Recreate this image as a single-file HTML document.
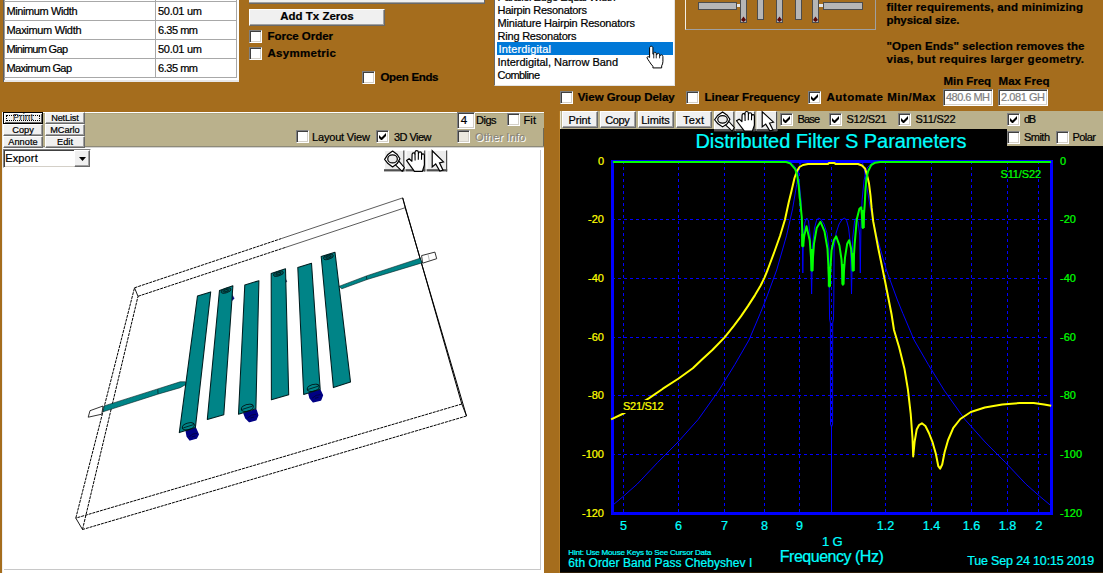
<!DOCTYPE html>
<html><head><meta charset="utf-8"><title>Filter</title>
<style>
html,body{margin:0;padding:0}
body{width:1103px;height:573px;overflow:hidden;position:relative;background:#a56d1d;font-family:"Liberation Sans",sans-serif}
.t{position:absolute;white-space:pre;line-height:1;font-family:"Liberation Sans",sans-serif;-webkit-text-stroke:0.22px currentColor}
.b{position:absolute}
.cb{position:absolute;width:13px;height:13px;box-sizing:border-box;border:1px solid;border-color:#808080 #fff #fff #808080;box-shadow:inset 1px 1px 0 #404040, inset -1px -1px 0 #d4d0c8}
.btn{position:absolute;box-sizing:border-box;background:#f0f0f0;border:1px solid;border-color:#fff #696969 #696969 #fff;box-shadow:inset -1px -1px 0 #a0a0a0}
svg{position:absolute;overflow:visible}
</style></head><body>
<div class="b" style="left:3px;top:0px;width:1px;height:82px;background:#5e5e5e;"></div>
<div class="b" style="left:4px;top:0px;width:235px;height:82px;background:#fff;"></div>
<div class="b" style="left:4px;top:0px;width:1px;height:80px;background:#9c9c9c;"></div>
<div class="b" style="left:4px;top:80px;width:235px;height:2px;background:#e8e8e8;"></div>
<div class="b" style="left:4px;top:1px;width:233px;height:1px;background:#a8a8a8;"></div>
<div class="b" style="left:4px;top:20px;width:233px;height:1px;background:#a8a8a8;"></div>
<div class="b" style="left:4px;top:39px;width:233px;height:1px;background:#a8a8a8;"></div>
<div class="b" style="left:4px;top:58px;width:233px;height:1px;background:#a8a8a8;"></div>
<div class="b" style="left:4px;top:77px;width:233px;height:1px;background:#a8a8a8;"></div>
<div class="b" style="left:155px;top:0px;width:1px;height:78px;background:#a8a8a8;"></div>
<div class="b" style="left:236px;top:0px;width:1px;height:78px;background:#a8a8a8;"></div>
<span class="t" style="left:6.50px;top:5.99px;font-size:11px;color:#000;letter-spacing:-0.399px;">Minimum Width</span>
<span class="t" style="left:158.00px;top:5.99px;font-size:11px;color:#000;letter-spacing:-0.266px;">50.01 um</span>
<span class="t" style="left:6.50px;top:24.99px;font-size:11px;color:#000;letter-spacing:-0.320px;">Maximum Width</span>
<span class="t" style="left:158.00px;top:24.99px;font-size:11px;color:#000;letter-spacing:-0.465px;">6.35 mm</span>
<span class="t" style="left:6.50px;top:43.99px;font-size:11px;color:#000;letter-spacing:-0.696px;">Minimum Gap</span>
<span class="t" style="left:158.00px;top:43.99px;font-size:11px;color:#000;letter-spacing:-0.266px;">50.01 um</span>
<span class="t" style="left:6.50px;top:62.99px;font-size:11px;color:#000;letter-spacing:-0.602px;">Maximum Gap</span>
<span class="t" style="left:158.00px;top:62.99px;font-size:11px;color:#000;letter-spacing:-0.465px;">6.35 mm</span>
<div class="b" style="left:249px;top:0px;width:236px;height:2px;background:#f0f0f0;"></div>
<div class="b" style="left:249px;top:2px;width:236px;height:1px;background:#a0a0a0;"></div>
<div class="b" style="left:249px;top:3px;width:236px;height:1px;background:#696969;"></div>
<div class="b" style="left:484px;top:0px;width:1px;height:4px;background:#696969;"></div>
<div class="btn" style="left:249px;top:9px;width:136px;height:17px"></div>
<span class="t" style="left:280.25px;top:11.07px;font-size:11.5px;font-weight:700;color:#000;letter-spacing:0.002px;">Add Tx Zeros</span>
<div class="cb" style="left:249px;top:30px;background:#fff">
</div>
<span class="t" style="left:267.50px;top:30.77px;font-size:11.5px;font-weight:700;color:#000;letter-spacing:-0.033px;">Force Order</span>
<div class="cb" style="left:249px;top:47px;background:#fff">
</div>
<span class="t" style="left:267.50px;top:47.77px;font-size:11.5px;font-weight:700;color:#000;letter-spacing:0.296px;">Asymmetric</span>
<div class="cb" style="left:362px;top:71px;background:#fff">
</div>
<span class="t" style="left:380.50px;top:71.77px;font-size:11.5px;font-weight:700;color:#000;letter-spacing:-0.338px;">Open Ends</span>
<div class="b" style="left:494px;top:0px;width:181px;height:86px;background:#fff;border-left:1px solid #696969;border-right:1px solid #e3e3e3;border-bottom:1px solid #e3e3e3;box-sizing:border-box"></div>
<span class="t" style="left:497.50px;top:-7.81px;font-size:11px;color:#000;letter-spacing:-0.408px;">Parallel Edge Equal Width</span>
<span class="t" style="left:497.50px;top:5.19px;font-size:11px;color:#000;letter-spacing:-0.274px;">Hairpin Resonators</span>
<span class="t" style="left:497.50px;top:18.19px;font-size:11px;color:#000;letter-spacing:-0.184px;">Miniature Hairpin Resonators</span>
<span class="t" style="left:497.50px;top:31.19px;font-size:11px;color:#000;letter-spacing:-0.209px;">Ring Resonators</span>
<div class="b" style="left:497px;top:42px;width:176px;height:13px;background:#0078d7;"></div>
<span class="t" style="left:498.50px;top:44.19px;font-size:11px;color:#fff;letter-spacing:0.159px;">Interdigital</span>
<span class="t" style="left:497.50px;top:57.19px;font-size:11px;color:#000;letter-spacing:-0.023px;">Interdigital, Narrow Band</span>
<span class="t" style="left:497.50px;top:70.19px;font-size:11px;color:#000;letter-spacing:-0.567px;">Combline</span>
<svg style="left:645px;top:44.5px" width="20" height="25" viewBox="0 0 24 30">
<path d="M7.5 1.5 C8.8 1.5 9.5 2.4 9.5 3.5 L9.5 11 L10.5 11 L10.5 10 C10.5 9 11.3 8.6 12.3 8.8 C13.2 9 13.5 9.6 13.5 10.5 L13.5 11.6 L14.5 11.6 L14.5 11 C14.5 10.1 15.3 9.8 16.2 10 C17 10.2 17.5 10.7 17.5 11.6 L17.5 12.8 L18.5 12.8 C18.5 11.9 19.2 11.6 20 11.8 C21 12 21.5 12.8 21.5 14 L21.5 20 C21.5 22 20.8 23.5 20 25 L20 27.5 L9.5 27.5 L9.5 25.5 C8 24 6.5 22 5 19.5 C4 18 2.8 16.5 2.5 15.5 C2.2 14.3 3.4 13.6 4.5 14.2 L5.5 15 L5.5 3.5 C5.5 2.4 6.2 1.5 7.5 1.5 Z" fill="#fff" stroke="#000" stroke-width="1.2" stroke-linejoin="round"/>
<path d="M10.5 11 L10.5 16 M13.5 11.6 L13.5 16 M17.5 12.8 L17.5 16" stroke="#000" stroke-width="1" fill="none"/>
</svg>
<div class="b" style="left:685px;top:0px;width:191px;height:30px;background:transparent;border-left:1px solid #f4efe4;border-bottom:1px solid #a0a0a0;border-right:1px solid #a0a0a0;box-sizing:border-box"></div>
<div class="b" style="left:698px;top:2px;width:39px;height:8px;background:#b6b6b6;border:1px solid #4c4c4c;box-sizing:border-box"></div>
<div class="b" style="left:823px;top:2px;width:40px;height:8px;background:#b6b6b6;border:1px solid #4c4c4c;box-sizing:border-box"></div>
<div class="b" style="left:740px;top:-1px;width:7px;height:24px;background:#b6b6b6;border:1px solid #4c4c4c;box-sizing:border-box"></div>
<svg style="left:740px;top:15px" width="7" height="8"><path d="M3.5 1.5 L6 5 L3.5 7 L1 5 Z" fill="#5a0808"/></svg>
<div class="b" style="left:757px;top:-1px;width:7px;height:21px;background:#b6b6b6;border:1px solid #4c4c4c;box-sizing:border-box"></div>
<div class="b" style="left:776px;top:-1px;width:7px;height:24px;background:#b6b6b6;border:1px solid #4c4c4c;box-sizing:border-box"></div>
<svg style="left:776px;top:15px" width="7" height="8"><path d="M3.5 1.5 L6 5 L3.5 7 L1 5 Z" fill="#5a0808"/></svg>
<div class="b" style="left:795px;top:-1px;width:7px;height:21px;background:#b6b6b6;border:1px solid #4c4c4c;box-sizing:border-box"></div>
<div class="b" style="left:812px;top:-1px;width:7px;height:24px;background:#b6b6b6;border:1px solid #4c4c4c;box-sizing:border-box"></div>
<svg style="left:812px;top:15px" width="7" height="8"><path d="M3.5 1.5 L6 5 L3.5 7 L1 5 Z" fill="#5a0808"/></svg>
<div class="b" style="left:737px;top:4px;width:3px;height:3px;background:#e8e8e8;"></div>
<div class="b" style="left:819px;top:4px;width:4px;height:3px;background:#e8e8e8;"></div>
<span class="t" style="left:886.50px;top:2.47px;font-size:11.5px;font-weight:700;color:#000;letter-spacing:0.160px;">filter requirements, and minimizing</span>
<span class="t" style="left:886.50px;top:15.27px;font-size:11.5px;font-weight:700;color:#000;letter-spacing:-0.088px;">physical size.</span>
<span class="t" style="left:886.50px;top:41.47px;font-size:11.5px;font-weight:700;color:#000;letter-spacing:0.075px;">"Open Ends" selection removes the</span>
<span class="t" style="left:886.50px;top:54.47px;font-size:11.5px;font-weight:700;color:#000;letter-spacing:0.289px;">vias, but requires larger geometry.</span>
<span class="t" style="left:943.50px;top:75.87px;font-size:11.5px;font-weight:700;color:#000;letter-spacing:-0.059px;">Min Freq</span>
<span class="t" style="left:998.50px;top:75.87px;font-size:11.5px;font-weight:700;color:#000;letter-spacing:0.073px;">Max Freq</span>
<div class="b" style="left:943px;top:89px;width:50px;height:17px;background:#fff;box-sizing:border-box;border:1px solid;border-color:#808080 #fff #fff #808080;box-shadow:inset 1px 1px 0 #404040, inset -1px -1px 0 #d4d0c8"></div>
<span class="t" style="left:946.00px;top:92.19px;font-size:11px;color:#808080;letter-spacing:-0.527px;">480.6 MH</span>
<div class="b" style="left:998px;top:89px;width:50px;height:17px;background:#fff;box-sizing:border-box;border:1px solid;border-color:#808080 #fff #fff #808080;box-shadow:inset 1px 1px 0 #404040, inset -1px -1px 0 #d4d0c8"></div>
<span class="t" style="left:1001.00px;top:92.19px;font-size:11px;color:#808080;letter-spacing:-0.440px;">2.081 GH</span>
<div class="cb" style="left:560px;top:91px;background:#fff">
</div>
<span class="t" style="left:577.70px;top:91.77px;font-size:11.5px;font-weight:700;color:#000;letter-spacing:-0.038px;">View Group Delay</span>
<div class="cb" style="left:686px;top:91px;background:#fff">
</div>
<span class="t" style="left:704.50px;top:91.77px;font-size:11.5px;font-weight:700;color:#000;letter-spacing:-0.024px;">Linear Frequency</span>
<div class="cb" style="left:808px;top:91px;background:#fff">
<svg width="9" height="9" viewBox="0 0 9 9" style="left:1px;top:1px"><path d="M1 3 L1 6 L3 8 L4 8 L8 4 L8 1 L3.5 5.5 Z" fill="#000"/></svg>
</div>
<span class="t" style="left:826.50px;top:91.77px;font-size:11.5px;font-weight:700;color:#000;letter-spacing:0.494px;">Automate Min/Max</span>
<div class="b" style="left:2px;top:112px;width:542px;height:461px;background:#fff;"></div>
<div class="b" style="left:2px;top:112px;width:542px;height:36px;background:#bab18c;"></div>
<div class="b" style="left:2px;top:112px;width:542px;height:1px;background:#fff;"></div>
<div class="b" style="left:2px;top:113px;width:542px;height:1px;background:#aea682;"></div>
<div class="b" style="left:2px;top:112px;width:2px;height:36px;background:#f4f2ea;"></div>
<div class="b" style="left:2px;top:146px;width:542px;height:1px;background:#8e8a78;"></div>
<div class="b" style="left:2px;top:147px;width:542px;height:1px;background:#d4d4d4;"></div>
<div class="b" style="left:543px;top:128px;width:1px;height:18px;background:#6e6a58;"></div>
<div class="b" style="left:2px;top:112px;width:1px;height:461px;background:#f0f0f0;"></div>
<div class="b" style="left:540px;top:150px;width:1px;height:420px;background:#c8c8c8;"></div>
<div class="b" style="left:4px;top:569px;width:537px;height:1px;background:#c8c8c8;"></div>
<div class="btn" style="left:3px;top:112px;width:40px;height:12px;border-color:#000;box-shadow:inset 1px 1px 0 #fff, inset -1px -1px 0 #696969;"></div>
<div class="b" style="left:6px;top:115px;width:34px;height:6px;border:1px dotted #000;box-sizing:border-box"></div>
<span class="t" style="left:13.00px;top:113.38px;font-size:9px;color:#333;letter-spacing:0.373px;">Print</span>
<div class="btn" style="left:3px;top:124px;width:40px;height:12px;"></div>
<span class="t" style="left:12.25px;top:125.51px;font-size:9.2px;color:#000;letter-spacing:0.007px;">Copy</span>
<div class="btn" style="left:3px;top:136px;width:40px;height:12px;"></div>
<span class="t" style="left:8.25px;top:137.51px;font-size:9.2px;color:#000;letter-spacing:0.068px;">Annote</span>
<div class="btn" style="left:45px;top:112px;width:40px;height:12px;"></div>
<span class="t" style="left:51.25px;top:113.51px;font-size:9.2px;color:#000;letter-spacing:-0.189px;">NetList</span>
<div class="btn" style="left:45px;top:124px;width:40px;height:12px;"></div>
<span class="t" style="left:50.25px;top:125.51px;font-size:9.2px;color:#000;letter-spacing:-0.030px;">MCarlo</span>
<div class="btn" style="left:45px;top:136px;width:40px;height:12px;"></div>
<span class="t" style="left:57.00px;top:137.51px;font-size:9.2px;color:#000;letter-spacing:0.049px;">Edit</span>
<div class="b" style="left:3px;top:149px;width:88px;height:19px;background:#fff;box-sizing:border-box;border:1px solid;border-color:#808080 #fff #fff #808080;box-shadow:inset 1px 1px 0 #404040, inset -1px -1px 0 #d4d0c8"></div>
<span class="t" style="left:5.20px;top:153.19px;font-size:11px;color:#000;letter-spacing:0.141px;">Export</span>
<div class="btn" style="left:74px;top:150px;width:16px;height:17px;background:#f0f0f0"></div>
<svg style="left:79px;top:157px" width="7" height="4"><path d="M0 0 L7 0 L3.5 4 Z" fill="#000"/></svg>
<div class="cb" style="left:296px;top:130px;background:#fff">
</div>
<span class="t" style="left:312.00px;top:131.69px;font-size:11px;color:#000;letter-spacing:-0.173px;">Layout View</span>
<div class="cb" style="left:376px;top:130px;background:#fff">
<svg width="9" height="9" viewBox="0 0 9 9" style="left:1px;top:1px"><path d="M1 3 L1 6 L3 8 L4 8 L8 4 L8 1 L3.5 5.5 Z" fill="#000"/></svg>
</div>
<span class="t" style="left:394.00px;top:131.69px;font-size:11px;color:#000;letter-spacing:-0.544px;">3D View</span>
<div class="b" style="left:457px;top:112px;width:18px;height:17px;background:#fff;box-sizing:border-box;border:1px solid;border-color:#808080 #fff #fff #808080;box-shadow:inset 1px 1px 0 #404040, inset -1px -1px 0 #d4d0c8"></div>
<span class="t" style="left:460.80px;top:114.57px;font-size:11.5px;color:#000;letter-spacing:0.000px;">4</span>
<span class="t" style="left:476.00px;top:114.69px;font-size:11px;color:#000;letter-spacing:-0.502px;">Digs</span>
<div class="cb" style="left:507px;top:113px;background:#fff">
</div>
<span class="t" style="left:523.50px;top:114.69px;font-size:11px;color:#000;letter-spacing:0.140px;">Fit</span>
<div class="cb" style="left:457px;top:130px;background:#ebe8df">
</div>
<span class="t" style="left:476.00px;top:132.69px;font-size:11px;color:#fff;letter-spacing:0.121px;">Other Info</span>
<span class="t" style="left:475.00px;top:131.69px;font-size:11px;color:#8a8678;letter-spacing:0.121px;">Other Info</span>
<svg style="left:383.5px;top:150px" width="64" height="22" viewBox="0 0 64 22" preserveAspectRatio="none"><rect x="0" y="0" width="20.4" height="21.4" fill="#ececec"/><path d="M0.5 21 L0.5 0.5 L19.9 0.5" stroke="#fff" stroke-width="1" fill="none"/><path d="M19.799999999999997 0.5 L19.799999999999997 21.4" stroke="#505050" stroke-width="1.2" fill="none"/><path d="M0 20.3 L20.4 20.3" stroke="#505050" stroke-width="2.2" fill="none"/><rect x="21.5" y="0" width="19.8" height="21.4" fill="#ececec"/><path d="M22.0 21 L22.0 0.5 L40.8 0.5" stroke="#fff" stroke-width="1" fill="none"/><path d="M40.699999999999996 0.5 L40.699999999999996 21.4" stroke="#505050" stroke-width="1.2" fill="none"/><path d="M21.5 20.3 L41.3 20.3" stroke="#505050" stroke-width="2.2" fill="none"/><rect x="42.6" y="0" width="20.6" height="21.4" fill="#ececec"/><path d="M43.1 21 L43.1 0.5 L62.7 0.5" stroke="#fff" stroke-width="1" fill="none"/><path d="M62.6 0.5 L62.6 21.4" stroke="#505050" stroke-width="1.2" fill="none"/><path d="M42.6 20.3 L63.2 20.3" stroke="#505050" stroke-width="2.2" fill="none"/><path d="M11.2 14.6 L14.9 11.2 L20.4 17.6 L18.2 21.4 Z" fill="#fff" stroke="#000" stroke-width="1.1" stroke-linejoin="round"/><path d="M0.6 9.3 L3.6 4.8 L8.6 1 L13.2 4.5 L15.9 8.8 L13.2 13.6 L8.6 16.9 L4 13.6 Z" fill="#fff" stroke="#000" stroke-width="1.2" stroke-linejoin="round"/><ellipse cx="8.55" cy="8.9" rx="4.8" ry="4" fill="#ececec" stroke="#000" stroke-width="1.2"/><path d="M22.5 10.4 L25.1 8.7 L27.9 11.2 L28.1 4.2 C28.3 2.4 30.8 2.4 31 4 L31 2.2 C31.2 0 34.2 0 34.4 2.2 L34.5 3.3 C34.8 1.3 37.4 1.5 37.6 3.5 L37.7 5 C38 3.2 40.3 3.5 40.4 5.4 L40.4 15 L38.4 21.4 L30.4 21.4 Z" fill="#fff" stroke="#000" stroke-width="1.2" stroke-linejoin="round"/><path d="M31 4 L31.1 10.6 M34.4 3 L34.3 9.8 M37.6 4 L37.5 9.8" stroke="#000" stroke-width="1.1" fill="none"/><path d="M48.2 0.8 L48.2 16.9 L51.7 14 L55.8 21 L59 20.2 L55.5 12.8 L59.5 11.9 Z" fill="#fff" stroke="#000" stroke-width="1.2" stroke-linejoin="miter"/></svg>
<svg style="left:0px;top:150px" width="544" height="423" viewBox="0 150 544 423">
<line x1="134.5" y1="287.8" x2="282.01" y2="238.35500000000002" stroke="#000" stroke-width="1" stroke-dasharray="3 0.9"/>
<line x1="282.01" y1="238.35500000000002" x2="402.7" y2="197.9" stroke="#4a4a4a" stroke-width="0.9" />
<line x1="402.7" y1="197.9" x2="461.8" y2="404" stroke="#000" stroke-width="1.0" />
<line x1="461.8" y1="404" x2="75.8" y2="518.1" stroke="#000" stroke-width="1" stroke-dasharray="3 0.9"/>
<line x1="75.8" y1="518.1" x2="134.5" y2="287.8" stroke="#000" stroke-width="1" stroke-dasharray="3 0.9"/>
<line x1="138" y1="296.3" x2="284.96000000000004" y2="247.57" stroke="#000" stroke-width="1" stroke-dasharray="3 0.9"/>
<line x1="284.96000000000004" y1="247.57" x2="405.2" y2="207.7" stroke="#4a4a4a" stroke-width="0.9" />
<line x1="405.2" y1="207.7" x2="466.5" y2="416" stroke="#000" stroke-width="1.0" />
<line x1="466.5" y1="416" x2="82.5" y2="529.5" stroke="#000" stroke-width="1" stroke-dasharray="3 0.9"/>
<line x1="82.5" y1="529.5" x2="138" y2="296.3" stroke="#000" stroke-width="1" stroke-dasharray="3 0.9"/>
<line x1="134.5" y1="287.8" x2="138" y2="296.3" stroke="#000" stroke-width="0.9" />
<line x1="402.7" y1="197.9" x2="405.2" y2="207.7" stroke="#000" stroke-width="0.9" />
<line x1="461.8" y1="404" x2="466.5" y2="416" stroke="#000" stroke-width="0.9" />
<line x1="75.8" y1="518.1" x2="82.5" y2="529.5" stroke="#000" stroke-width="0.9" />
<polygon points="90.0,410.7 103.0,406.0 101.8,414.2 88.2,417.2" fill="#fff" stroke="#000" stroke-width="0.8" />
<polygon points="104.2,405.9 157.8,388.9 180.2,381.8 185.5,381.8 185.5,384.7 180.2,387.7 157.8,394.2 103.0,411.8" fill="#008487" stroke="#001e20" stroke-width="0.6" />
<line x1="157.8" y1="389.3" x2="158" y2="393.8" stroke="#001e20" stroke-width="0.7" />
<polygon points="421.6,255.6 434.9,252.1 436.7,258.7 422.6,263.2" fill="#fff" stroke="#000" stroke-width="0.8" />
<line x1="428" y1="254.5" x2="429.5" y2="261" stroke="#888" stroke-width="0.6" />
<polygon points="338.9,286.4 367.1,275.7 420.2,258.2 421.9,262.9 367.1,279.5 341.8,288.8" fill="#008487" stroke="#001e20" stroke-width="0.6" />
<line x1="366.3" y1="276" x2="366.8" y2="279.6" stroke="#001e20" stroke-width="0.7" />
<polygon points="186.2,430.7 195.4,428.0 198.2,434.4 196.3,438.1 189.9,439.9 187.2,436.2" fill="#000084" stroke="#000084" stroke-width="1.5" stroke-linejoin="round"/>
<polygon points="244.0,413.3 255.9,409.7 257.7,415.2 255.9,419.7 249.5,421.6 245.8,417.9" fill="#000084" stroke="#000084" stroke-width="1.5" stroke-linejoin="round"/>
<polygon points="308.7,392.6 319.7,389.5 322.4,395.3 320.6,399.9 313.2,401.7 310.1,398.1" fill="#000084" stroke="#000084" stroke-width="1.5" stroke-linejoin="round"/>
<path d="M188.8 437.0 Q192.8 433.0 197.3 433.3 M191.8 437.0 L195.3 436.0" stroke="#00003a" stroke-width="0.8" fill="none"/>
<path d="M247.5 418.0 Q251.5 414.0 256.0 414.3 M250.5 418.0 L254.0 417.0" stroke="#00003a" stroke-width="0.8" fill="none"/>
<path d="M312 398.3 Q316 394.3 320.5 394.6 M315 398.3 L318.5 397.3" stroke="#00003a" stroke-width="0.8" fill="none"/>
<polygon points="231.8,294.0 234.2,298.5 232.0,300.5" fill="#000084" stroke="#000084" stroke-width="0.5" />
<polygon points="285.0,278.0 286.8,281.5 285.2,283.0" fill="#101040" stroke="#101040" stroke-width="0.5" />
<polygon points="197.5,295.9 210.7,291.9 195.4,427.6 179.3,432.6" fill="#008487" stroke="#001e20" stroke-width="1.05" stroke-linejoin="round"/>
<polygon points="219.5,290.4 232.9,285.8 223.8,414.8 207.3,419.4" fill="#008487" stroke="#001e20" stroke-width="1.05" stroke-linejoin="round"/>
<polygon points="244.8,284.9 258.9,280.7 255.9,408.7 238.5,414.2" fill="#008487" stroke="#001e20" stroke-width="1.05" stroke-linejoin="round"/>
<polygon points="271.2,273.5 285.5,268.8 288.7,394.7 271.4,399.8" fill="#008487" stroke="#001e20" stroke-width="1.05" stroke-linejoin="round"/>
<polygon points="297.8,267.5 311.5,263.3 320.2,389.3 303.7,394.4" fill="#008487" stroke="#001e20" stroke-width="1.05" stroke-linejoin="round"/>
<polygon points="321.2,256.5 335.0,252.3 350.5,381.9 333.4,387.6" fill="#008487" stroke="#001e20" stroke-width="1.05" stroke-linejoin="round"/>
<ellipse cx="188.3" cy="426.3" rx="6.2" ry="3.3" transform="rotate(-17 188.3 426.3)" fill="none" stroke="#001012" stroke-width="1"/>
<line x1="183.3" y1="427.90000000000003" x2="193.3" y2="424.7" stroke="#001012" stroke-width="0.8"/>
<ellipse cx="247.3" cy="407.8" rx="6.2" ry="3.3" transform="rotate(-17 247.3 407.8)" fill="none" stroke="#001012" stroke-width="1"/>
<line x1="242.3" y1="409.40000000000003" x2="252.3" y2="406.2" stroke="#001012" stroke-width="0.8"/>
<ellipse cx="313.2" cy="387.8" rx="6.2" ry="3.3" transform="rotate(-17 313.2 387.8)" fill="none" stroke="#001012" stroke-width="1"/>
<line x1="308.2" y1="389.40000000000003" x2="318.2" y2="386.2" stroke="#001012" stroke-width="0.8"/>
<ellipse cx="226" cy="290.6" rx="5.2" ry="2.2" transform="rotate(-17 226 290.6)" fill="#02595b" stroke="#002224" stroke-width="0.9"/>
<ellipse cx="226" cy="290.6" rx="2.6" ry="1" transform="rotate(-17 226 290.6)" fill="none" stroke="#001314" stroke-width="0.7"/>
<ellipse cx="278.4" cy="273.7" rx="5.2" ry="2.2" transform="rotate(-17 278.4 273.7)" fill="#02595b" stroke="#002224" stroke-width="0.9"/>
<ellipse cx="278.4" cy="273.7" rx="2.6" ry="1" transform="rotate(-17 278.4 273.7)" fill="none" stroke="#001314" stroke-width="0.7"/>
<ellipse cx="328.4" cy="257" rx="5.2" ry="2.2" transform="rotate(-17 328.4 257)" fill="#02595b" stroke="#002224" stroke-width="0.9"/>
<ellipse cx="328.4" cy="257" rx="2.6" ry="1" transform="rotate(-17 328.4 257)" fill="none" stroke="#001314" stroke-width="0.7"/>
</svg>
<div class="b" style="left:560px;top:129px;width:543px;height:444px;background:#000;"></div>
<div class="b" style="left:560px;top:572px;width:543px;height:1px;background:#2c1d08;"></div>
<div class="b" style="left:559px;top:111px;width:1px;height:462px;background:#b47a24;"></div>
<div class="b" style="left:560px;top:111px;width:543px;height:18px;background:#bab18c;"></div>
<div class="b" style="left:1007px;top:111px;width:96px;height:35px;background:#bab18c;"></div>
<div class="b" style="left:560px;top:111px;width:1px;height:18px;background:#e8e4d0;"></div>
<div class="btn" style="left:562px;top:111px;width:36px;height:17px"></div>
<span class="t" style="left:568.50px;top:114.69px;font-size:11px;color:#000;letter-spacing:-0.155px;">Print</span>
<div class="btn" style="left:600px;top:111px;width:36px;height:17px"></div>
<span class="t" style="left:605.25px;top:114.69px;font-size:11px;color:#000;letter-spacing:-0.393px;">Copy</span>
<div class="btn" style="left:638px;top:111px;width:36px;height:17px"></div>
<span class="t" style="left:641.25px;top:114.69px;font-size:11px;color:#000;letter-spacing:-0.045px;">Limits</span>
<div class="btn" style="left:676px;top:111px;width:36px;height:17px"></div>
<span class="t" style="left:683.00px;top:114.69px;font-size:11px;color:#000;letter-spacing:0.275px;">Text</span>
<div class="cb" style="left:780px;top:113px;background:#fff">
<svg width="9" height="9" viewBox="0 0 9 9" style="left:1px;top:1px"><path d="M1 3 L1 6 L3 8 L4 8 L8 4 L8 1 L3.5 5.5 Z" fill="#000"/></svg>
</div>
<span class="t" style="left:797.50px;top:114.19px;font-size:11px;color:#000;letter-spacing:-0.858px;">Base</span>
<div class="cb" style="left:829px;top:113px;background:#fff">
<svg width="9" height="9" viewBox="0 0 9 9" style="left:1px;top:1px"><path d="M1 3 L1 6 L3 8 L4 8 L8 4 L8 1 L3.5 5.5 Z" fill="#000"/></svg>
</div>
<span class="t" style="left:846.50px;top:114.19px;font-size:11px;color:#000;letter-spacing:-0.367px;">S12/S21</span>
<div class="cb" style="left:898px;top:113px;background:#fff">
<svg width="9" height="9" viewBox="0 0 9 9" style="left:1px;top:1px"><path d="M1 3 L1 6 L3 8 L4 8 L8 4 L8 1 L3.5 5.5 Z" fill="#000"/></svg>
</div>
<span class="t" style="left:915.50px;top:114.19px;font-size:11px;color:#000;letter-spacing:-0.231px;">S11/S22</span>
<div class="cb" style="left:1007px;top:113px;background:#fff">
<svg width="9" height="9" viewBox="0 0 9 9" style="left:1px;top:1px"><path d="M1 3 L1 6 L3 8 L4 8 L8 4 L8 1 L3.5 5.5 Z" fill="#000"/></svg>
</div>
<span class="t" style="left:1024.00px;top:114.19px;font-size:11px;color:#000;letter-spacing:-1.455px;">dB</span>
<div class="cb" style="left:1007px;top:131px;background:#fff">
</div>
<span class="t" style="left:1024.00px;top:132.19px;font-size:11px;color:#000;letter-spacing:-0.530px;">Smith</span>
<div class="cb" style="left:1056px;top:131px;background:#fff">
</div>
<span class="t" style="left:1072.50px;top:132.19px;font-size:11px;color:#000;letter-spacing:-0.545px;">Polar</span>
<svg style="left:560px;top:129px" width="543" height="444" viewBox="560 129 543 444">
<path d="M623.5 161 L623.5 513" stroke="#0000ff" stroke-width="1" stroke-dasharray="3 3" fill="none" shape-rendering="crispEdges"/>
<path d="M678.5 161 L678.5 513" stroke="#0000ff" stroke-width="1" stroke-dasharray="3 3" fill="none" shape-rendering="crispEdges"/>
<path d="M724.5 161 L724.5 513" stroke="#0000ff" stroke-width="1" stroke-dasharray="3 3" fill="none" shape-rendering="crispEdges"/>
<path d="M764.5 161 L764.5 513" stroke="#0000ff" stroke-width="1" stroke-dasharray="3 3" fill="none" shape-rendering="crispEdges"/>
<path d="M799.5 161 L799.5 513" stroke="#0000ff" stroke-width="1" stroke-dasharray="3 3" fill="none" shape-rendering="crispEdges"/>
<path d="M831.5 161 L831.5 513" stroke="#0000ff" stroke-width="1" stroke-dasharray="3 3" fill="none" shape-rendering="crispEdges"/>
<path d="M885.5 161 L885.5 513" stroke="#0000ff" stroke-width="1" stroke-dasharray="3 3" fill="none" shape-rendering="crispEdges"/>
<path d="M931.5 161 L931.5 513" stroke="#0000ff" stroke-width="1" stroke-dasharray="3 3" fill="none" shape-rendering="crispEdges"/>
<path d="M971.5 161 L971.5 513" stroke="#0000ff" stroke-width="1" stroke-dasharray="3 3" fill="none" shape-rendering="crispEdges"/>
<path d="M1007.5 161 L1007.5 513" stroke="#0000ff" stroke-width="1" stroke-dasharray="3 3" fill="none" shape-rendering="crispEdges"/>
<path d="M1038.5 161 L1038.5 513" stroke="#0000ff" stroke-width="1" stroke-dasharray="3 3" fill="none" shape-rendering="crispEdges"/>
<path d="M612 219.5 L1050 219.5" stroke="#0000ff" stroke-width="1" stroke-dasharray="3 3" fill="none" shape-rendering="crispEdges"/>
<path d="M612 278.5 L1050 278.5" stroke="#0000ff" stroke-width="1" stroke-dasharray="3 3" fill="none" shape-rendering="crispEdges"/>
<path d="M612 337.5 L1050 337.5" stroke="#0000ff" stroke-width="1" stroke-dasharray="3 3" fill="none" shape-rendering="crispEdges"/>
<path d="M612 395.5 L1050 395.5" stroke="#0000ff" stroke-width="1" stroke-dasharray="3 3" fill="none" shape-rendering="crispEdges"/>
<path d="M612 454.5 L1050 454.5" stroke="#0000ff" stroke-width="1" stroke-dasharray="3 3" fill="none" shape-rendering="crispEdges"/>
<rect x="612.5" y="161.5" width="439" height="352" fill="none" stroke="#0000ff" stroke-width="3" shape-rendering="crispEdges"/>
<polyline points="612.0,505.8 623.6,496.1 637.3,484.0 657.6,462.5 678.0,442.0 698.3,419.3 718.6,390.8 734.9,364.4 749.0,340.0 760.2,313.5 765.7,300.0 776.7,270.0 786.5,235.8 792.6,208.9 796.7,184.4 798.7,169.8 800.5,163.0 805.0,162.0 858.0,162.0 862.6,163.0 864.4,169.8 866.4,184.4 870.5,208.9 876.6,235.8 886.4,270.0 897.4,300.0 902.9,313.5 914.1,340.0 928.2,364.4 944.5,390.8 964.8,419.3 985.1,442.0 1005.5,462.5 1025.8,484.0 1039.5,496.1 1051.1,505.8" fill="none" stroke="#0000ff" stroke-width="1"/>
<polyline points="786.0,162.0 792.0,163.5 796.0,168.0 799.0,180.0 801.0,200.0 802.2,230.0 802.8,273.0 803.4,235.0 805.0,222.0 806.8,218.0 808.5,221.0 810.4,238.0 811.6,294.0 812.6,245.0 814.5,228.0 816.5,220.5 818.5,218.0 821.0,219.5 824.0,224.0 827.0,233.0 829.0,248.0 829.3,300.0 829.6,319.0 830.4,323.0 830.5,424.0 831.5,427.0 831.5,512.0 831.5,427.0 832.6,424.0 832.7,323.0 833.5,319.0 833.8,300.0 834.1,248.0 836.1,233.0 839.1,224.0 842.1,219.5 844.6,218.0 846.6,220.5 848.6,228.0 850.5,245.0 851.5,294.0 852.7,238.0 854.6,221.0 856.3,218.0 858.1,222.0 859.7,235.0 860.3,273.0 860.9,230.0 862.1,200.0 864.1,180.0 867.1,168.0 871.1,163.5 877.1,162.0" fill="none" stroke="#0000ff" stroke-width="1"/>
<polyline points="611.1,419.3 624.5,413.0 636.0,406.0 648.8,398.4 662.9,388.7 678.6,378.5 692.8,368.3 702.0,359.5 712.6,349.8 724.4,337.6 733.8,325.8 740.9,316.4 747.9,306.1 755.0,295.1 760.5,285.7 764.4,277.9 767.6,270.0 774.5,251.5 780.0,236.0 785.0,219.5 788.8,202.0 791.5,191.0 794.5,178.0 797.0,171.0 799.5,167.0 803.0,165.0 808.0,164.0 828.0,164.0 829.0,163.0 834.5,163.0 835.5,164.0 858.0,164.0 862.0,165.5 865.0,168.5 867.0,175.0 869.0,183.5 870.5,195.5 871.6,207.7 873.2,221.4 878.2,248.0 885.0,281.0 891.5,314.0 894.0,330.0 899.2,347.5 904.4,368.4 907.9,389.4 910.7,413.8 912.5,438.3 913.2,456.4 914.6,441.8 916.7,429.5 919.1,425.0 921.9,423.3 925.4,426.0 928.9,433.0 932.4,441.8 935.9,454.0 938.3,466.2 940.1,468.7 942.2,464.5 944.6,452.2 948.1,440.0 953.3,427.8 960.3,419.0 970.8,412.0 984.8,407.5 1002.2,404.4 1019.7,403.0 1033.7,403.0 1044.2,404.4 1051.2,405.8" fill="none" stroke="#ffff00" stroke-width="2" stroke-linejoin="round"/>
<polyline points="613.0,162.0 786.0,162.0 790.0,163.2 795.2,169.2 797.2,175.3 798.7,185.4 799.7,197.6 800.1,200.0 801.8,217.5 802.7,246.3 804.4,235.0 806.5,226.2 809.7,240.2 812.0,270.7 814.0,243.7 816.7,228.0 820.5,221.8 824.5,231.4 827.5,248.9 829.4,286.4 831.5,250.6 833.8,240.2 836.2,236.3 839.4,245.4 841.5,259.4 842.9,284.7 845.0,257.6 847.2,243.7 849.1,240.2 851.2,248.9 853.0,270.7 854.7,243.7 856.8,219.2 859.4,208.7 861.2,207.3 862.9,227.9 864.7,205.2 865.5,188.5 866.5,178.3 868.1,171.3 871.1,165.2 875.1,162.7 880.0,162.0 1051.0,162.0" fill="none" stroke="#00ff00" stroke-width="2" stroke-linejoin="round"/>
<line x1="802.8" y1="234" x2="802.8" y2="246.5" stroke="#00ff00" stroke-width="3.2"/>
<line x1="812" y1="249" x2="812" y2="271" stroke="#00ff00" stroke-width="3.2"/>
<line x1="829.4" y1="267" x2="829.4" y2="286.5" stroke="#00ff00" stroke-width="3.2"/>
<line x1="843" y1="264" x2="843" y2="284.5" stroke="#00ff00" stroke-width="3.2"/>
<line x1="853.2" y1="253" x2="853.2" y2="271" stroke="#00ff00" stroke-width="3.2"/>
<line x1="863.2" y1="210" x2="863.2" y2="228" stroke="#00ff00" stroke-width="3.2"/>
<rect x="621" y="400" width="44" height="13" fill="#000"/>
</svg>
<span class="t" style="left:695.50px;top:131.07px;font-size:20px;color:#00ffff;letter-spacing:-0.081px;">Distributed Filter S Parameters</span>
<span class="t" style="left:597.88px;top:156.19px;font-size:11px;color:#ffff00;letter-spacing:0.000px;">0</span>
<span class="t" style="left:1060.00px;top:156.19px;font-size:11px;color:#00ff00;letter-spacing:0.000px;">0</span>
<span class="t" style="left:588.10px;top:214.29px;font-size:11px;color:#ffff00;letter-spacing:0.000px;">-20</span>
<span class="t" style="left:1060.00px;top:214.29px;font-size:11px;color:#00ff00;letter-spacing:0.000px;">-20</span>
<span class="t" style="left:588.10px;top:273.29px;font-size:11px;color:#ffff00;letter-spacing:0.000px;">-40</span>
<span class="t" style="left:1060.00px;top:273.29px;font-size:11px;color:#00ff00;letter-spacing:0.000px;">-40</span>
<span class="t" style="left:588.10px;top:332.39px;font-size:11px;color:#ffff00;letter-spacing:0.000px;">-60</span>
<span class="t" style="left:1060.00px;top:332.39px;font-size:11px;color:#00ff00;letter-spacing:0.000px;">-60</span>
<span class="t" style="left:588.10px;top:390.29px;font-size:11px;color:#ffff00;letter-spacing:0.000px;">-80</span>
<span class="t" style="left:1060.00px;top:390.29px;font-size:11px;color:#00ff00;letter-spacing:0.000px;">-80</span>
<span class="t" style="left:581.98px;top:449.29px;font-size:11px;color:#ffff00;letter-spacing:0.000px;">-100</span>
<span class="t" style="left:1060.00px;top:449.29px;font-size:11px;color:#00ff00;letter-spacing:0.000px;">-100</span>
<span class="t" style="left:581.98px;top:508.09px;font-size:11px;color:#ffff00;letter-spacing:0.000px;">-120</span>
<span class="t" style="left:1060.00px;top:508.09px;font-size:11px;color:#00ff00;letter-spacing:0.000px;">-120</span>
<span class="t" style="left:620.00px;top:519.83px;font-size:12.6px;color:#00ffff;letter-spacing:0.000px;">5</span>
<span class="t" style="left:675.00px;top:519.83px;font-size:12.6px;color:#00ffff;letter-spacing:0.000px;">6</span>
<span class="t" style="left:721.00px;top:519.83px;font-size:12.6px;color:#00ffff;letter-spacing:0.000px;">7</span>
<span class="t" style="left:761.00px;top:519.83px;font-size:12.6px;color:#00ffff;letter-spacing:0.000px;">8</span>
<span class="t" style="left:796.00px;top:519.83px;font-size:12.6px;color:#00ffff;letter-spacing:0.000px;">9</span>
<span class="t" style="left:876.74px;top:519.83px;font-size:12.6px;color:#00ffff;letter-spacing:0.000px;">1.2</span>
<span class="t" style="left:922.74px;top:519.83px;font-size:12.6px;color:#00ffff;letter-spacing:0.000px;">1.4</span>
<span class="t" style="left:962.74px;top:519.83px;font-size:12.6px;color:#00ffff;letter-spacing:0.000px;">1.6</span>
<span class="t" style="left:998.74px;top:519.83px;font-size:12.6px;color:#00ffff;letter-spacing:0.000px;">1.8</span>
<span class="t" style="left:1035.40px;top:519.83px;font-size:12.6px;color:#00ffff;letter-spacing:0.000px;">2</span>
<span class="t" style="left:822.00px;top:535.00px;font-size:13px;color:#00ffff;letter-spacing:-0.227px;">1 G</span>
<span class="t" style="left:779.80px;top:549.06px;font-size:16px;color:#00ffff;letter-spacing:-0.481px;">Frequency (Hz)</span>
<span class="t" style="left:568.30px;top:556.84px;font-size:12px;color:#00ffff;letter-spacing:0.063px;">6th Order Band Pass Chebyshev I</span>
<span class="t" style="left:568.30px;top:549.03px;font-size:8px;color:#00ffff;letter-spacing:-0.180px;">Hint: Use Mouse Keys to See Cursor Data</span>
<span class="t" style="left:967.20px;top:555.42px;font-size:12.5px;color:#00ffff;letter-spacing:-0.160px;">Tue Sep 24 10:15 2019</span>
<span class="t" style="left:623.00px;top:400.69px;font-size:11px;color:#ffff00;letter-spacing:-0.284px;">S21/S12</span>
<span class="t" style="left:1000.50px;top:169.19px;font-size:11px;color:#00ff00;letter-spacing:-0.148px;">S11/S22</span>
<svg style="left:714px;top:111.3px" width="64" height="20.7" viewBox="0 0 64 22" preserveAspectRatio="none"><rect x="0" y="0" width="20.4" height="21.4" fill="#ececec"/><path d="M0.5 21 L0.5 0.5 L19.9 0.5" stroke="#fff" stroke-width="1" fill="none"/><path d="M19.799999999999997 0.5 L19.799999999999997 21.4" stroke="#505050" stroke-width="1.2" fill="none"/><path d="M0 20.3 L20.4 20.3" stroke="#505050" stroke-width="2.2" fill="none"/><rect x="21.5" y="0" width="19.8" height="21.4" fill="#ececec"/><path d="M22.0 21 L22.0 0.5 L40.8 0.5" stroke="#fff" stroke-width="1" fill="none"/><path d="M40.699999999999996 0.5 L40.699999999999996 21.4" stroke="#505050" stroke-width="1.2" fill="none"/><path d="M21.5 20.3 L41.3 20.3" stroke="#505050" stroke-width="2.2" fill="none"/><rect x="42.6" y="0" width="20.6" height="21.4" fill="#ececec"/><path d="M43.1 21 L43.1 0.5 L62.7 0.5" stroke="#fff" stroke-width="1" fill="none"/><path d="M62.6 0.5 L62.6 21.4" stroke="#505050" stroke-width="1.2" fill="none"/><path d="M42.6 20.3 L63.2 20.3" stroke="#505050" stroke-width="2.2" fill="none"/><path d="M11.2 14.6 L14.9 11.2 L20.4 17.6 L18.2 21.4 Z" fill="#fff" stroke="#000" stroke-width="1.1" stroke-linejoin="round"/><path d="M0.6 9.3 L3.6 4.8 L8.6 1 L13.2 4.5 L15.9 8.8 L13.2 13.6 L8.6 16.9 L4 13.6 Z" fill="#fff" stroke="#000" stroke-width="1.2" stroke-linejoin="round"/><ellipse cx="8.55" cy="8.9" rx="4.8" ry="4" fill="#ececec" stroke="#000" stroke-width="1.2"/><path d="M22.5 10.4 L25.1 8.7 L27.9 11.2 L28.1 4.2 C28.3 2.4 30.8 2.4 31 4 L31 2.2 C31.2 0 34.2 0 34.4 2.2 L34.5 3.3 C34.8 1.3 37.4 1.5 37.6 3.5 L37.7 5 C38 3.2 40.3 3.5 40.4 5.4 L40.4 15 L38.4 21.4 L30.4 21.4 Z" fill="#fff" stroke="#000" stroke-width="1.2" stroke-linejoin="round"/><path d="M31 4 L31.1 10.6 M34.4 3 L34.3 9.8 M37.6 4 L37.5 9.8" stroke="#000" stroke-width="1.1" fill="none"/><path d="M48.2 0.8 L48.2 16.9 L51.7 14 L55.8 21 L59 20.2 L55.5 12.8 L59.5 11.9 Z" fill="#fff" stroke="#000" stroke-width="1.2" stroke-linejoin="miter"/></svg>
</body></html>
